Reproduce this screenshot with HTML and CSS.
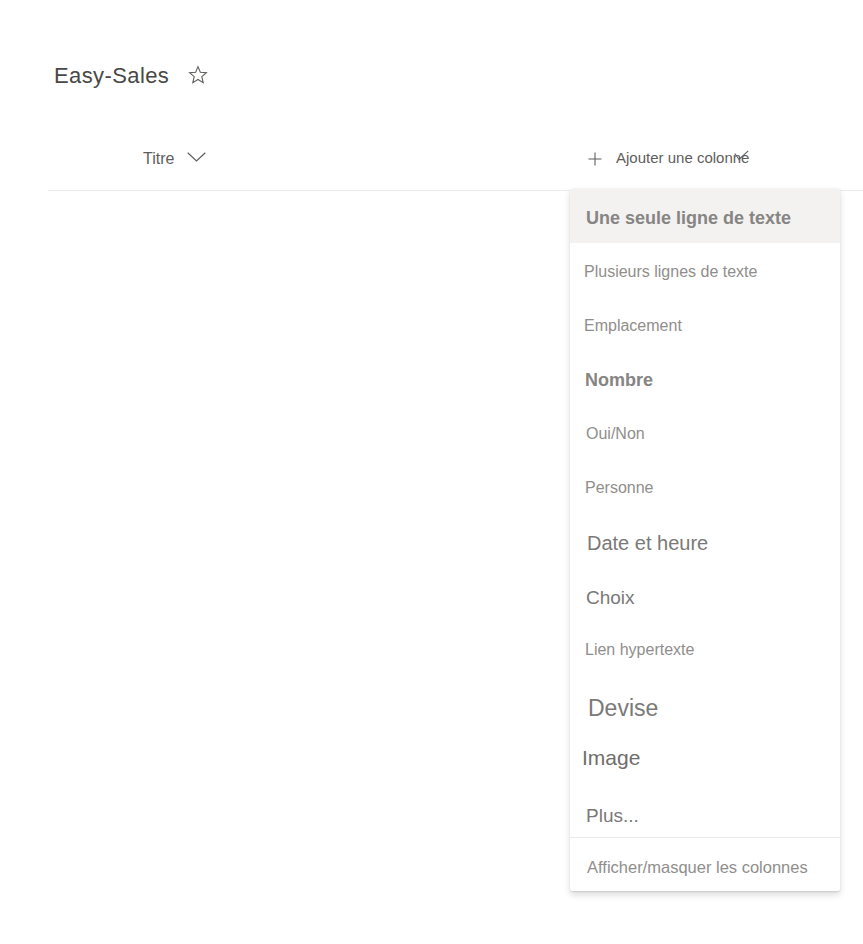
FILE: index.html
```html
<!DOCTYPE html>
<html lang="fr">
<head>
<meta charset="utf-8">
<title>Easy-Sales</title>
<link rel="stylesheet" href="styles.css">
</head>
<body>
<div class="page">
  <div class="title-row">
    <h1 class="title">Easy-Sales</h1>
    <svg class="star" width="20" height="20" viewBox="0 0 20 20" aria-hidden="true">
      <path d="M10 1.6 L12.35 7.2 L18.4 7.7 L13.8 11.7 L15.2 17.6 L10 14.5 L4.8 17.6 L6.2 11.7 L1.6 7.7 L7.65 7.2 Z" fill="none" stroke="#605e5c" stroke-width="1.1" stroke-linejoin="miter"/>
    </svg>
  </div>
  <div class="header">
    <div class="col-title">
      <span class="col-label">Titre</span>
      <svg class="chevron" width="19" height="10" viewBox="0 0 19 10" aria-hidden="true">
        <path d="M0.7 0.7 L9.5 9 L18.3 0.7" fill="none" stroke="#605e5c" stroke-width="1.2"/>
      </svg>
    </div>
    <div class="col-add">
      <svg class="plus" width="14" height="14" viewBox="0 0 14 14" aria-hidden="true">
        <path d="M7 0.5 V13.5 M0.5 7 H13.5" fill="none" stroke="#605e5c" stroke-width="1.1"/>
      </svg>
      <span class="add-label">Ajouter une colonne</span>
      <svg class="check" width="15" height="11" viewBox="0 0 15 11" aria-hidden="true">
        <path d="M0.8 3.5 L5 9.5 L14.2 0.8" fill="none" stroke="#605e5c" stroke-width="1.1"/>
      </svg>
    </div>
  </div>

  <div class="menu" role="menu">
    <div class="item hovered i-une">Une seule ligne de texte</div>
    <div class="item i-plusieurs">Plusieurs lignes de texte</div>
    <div class="item i-emplacement">Emplacement</div>
    <div class="item i-nombre">Nombre</div>
    <div class="item i-oui">Oui/Non</div>
    <div class="item i-personne">Personne</div>
    <div class="item i-date">Date et heure</div>
    <div class="item i-choix">Choix</div>
    <div class="item i-lien">Lien hypertexte</div>
    <div class="item i-devise">Devise</div>
    <div class="item i-image">Image</div>
    <div class="item i-plus">Plus...</div>
    <div class="divider"></div>
    <div class="item i-afficher">Afficher/masquer les colonnes</div>
  </div>
</div>
</body>
</html>
```

FILE: styles.css
```css
html, body {
  margin: 0;
  padding: 0;
  background: #ffffff;
}

body {
  font-family: "Liberation Sans", Arial, sans-serif;
  color: #323130;
}

.page {
  position: relative;
  width: 863px;
  height: 944px;
  padding-top: 63px;
  box-sizing: border-box;
}

.title-row {
  display: flex;
  align-items: center;
  gap: 19px;
  margin-left: 54px;
  height: 26px;
}

.title {
  margin: 0;
  font-size: 22px;
  font-weight: 400;
  letter-spacing: 0.4px;
  color: #494846;
  line-height: 26px;
}

.star {
  display: block;
  margin-top: -3px;
}

.header {
  position: relative;
  margin-left: 48px;
  margin-top: 45px;
  height: 56px;
  border-bottom: 1px solid #edebe9;
}

.col-title {
  position: absolute;
  left: 95px;
  top: 13px;
  display: flex;
  align-items: center;
  gap: 13px;
  height: 24px;
}

.col-label {
  font-size: 16px;
  color: #605e5c;
  line-height: 24px;
}

.chevron {
  display: block;
  margin-top: -4px;
}

.col-add {
  position: absolute;
  left: 540px;
  top: 12px;
  display: flex;
  align-items: center;
  height: 24px;
}

.plus {
  display: block;
  margin-right: 14px;
  margin-top: 1px;
}

.add-label {
  font-size: 15px;
  color: #605e5c;
  line-height: 24px;
}

.check {
  display: block;
  margin-left: -15px;
  margin-top: -6px;
}

.menu {
  position: absolute;
  left: 570px;
  top: 189px;
  width: 270px;
  background: #ffffff;
  border-radius: 2px;
  box-shadow: 0 3.2px 7.2px rgba(0, 0, 0, 0.132), 0 0.6px 1.8px rgba(0, 0, 0, 0.108);
  display: flex;
  flex-direction: column;
}

.item {
  height: 54px;
  display: flex;
  align-items: center;
  padding-left: 14px;
  padding-top: 4px;
  box-sizing: border-box;
  font-size: 16px;
  color: #908e8c;
  white-space: nowrap;
}

.hovered {
  background: #f3f2f1;
  border-radius: 2px 2px 0 0;
}

.i-une {
  padding-left: 16px;
  font-size: 18px;
  font-weight: 700;
  color: #878583;
  padding-top: 5px;
}

.i-plusieurs { padding-left: 14px; }
.i-emplacement { padding-left: 14px; }

.i-nombre {
  padding-left: 15px;
  font-size: 18px;
  font-weight: 700;
  color: #878583;
  padding-top: 5px;
}

.i-oui { padding-left: 16px; }
.i-personne { padding-left: 15px; }

.i-date {
  padding-left: 17px;
  font-size: 20px;
  color: #7a7977;
  padding-top: 6px;
}

.i-choix {
  padding-left: 16px;
  font-size: 19px;
  color: #7a7977;
  padding-top: 7px;
}

.i-lien { padding-left: 15px; }

.i-devise {
  padding-left: 18px;
  font-size: 23px;
  color: #7a7977;
  padding-top: 12px;
}

.i-image {
  padding-left: 12px;
  font-size: 21px;
  color: #6f6e6c;
  padding-top: 4px;
}

.i-plus {
  padding-left: 16px;
  font-size: 19px;
  color: #7a7977;
  padding-top: 12px;
}

.divider {
  height: 1px;
  background: #edebe9;
}

.i-afficher {
  height: 53px;
  padding-left: 17px;
  font-size: 16.5px;
  color: #908e8c;
  padding-top: 6px;
}
```
